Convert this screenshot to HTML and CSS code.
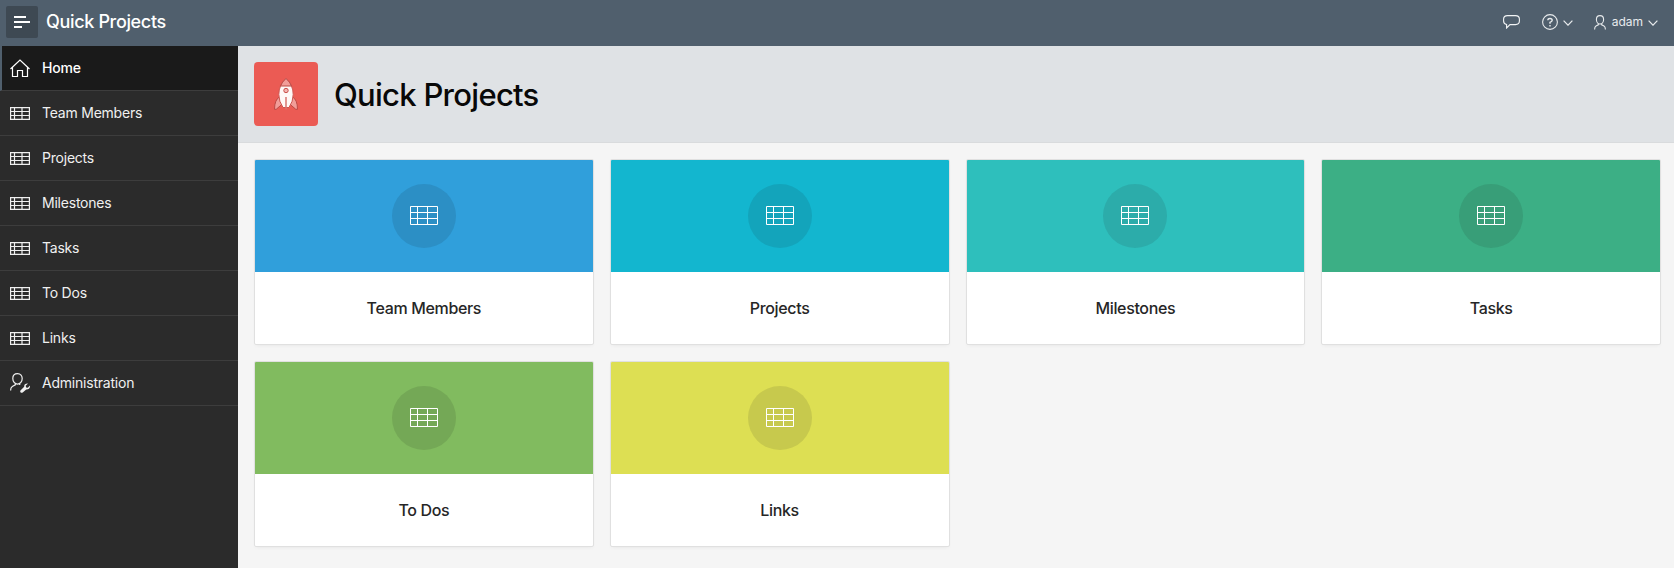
FILE: index.html
```html
<!DOCTYPE html>
<html lang="en">
<head>
<meta charset="utf-8">
<title>Quick Projects</title>
<link rel="stylesheet" href="styles.css">
</head>
<body>
<svg width="0" height="0" class="defs">
  <symbol id="table" viewBox="0 0 20 13"><path d="M.6.6h18.800v11.800H.6zM0 4.500h20M0 8.500h20M4.500 0v13M12 0v13" fill="none" stroke="currentColor" stroke-width="1.200"/></symbol>
  <symbol id="table-lg" viewBox="0 0 28 19"><path d="M.5.5h27v18H.5zM0 6.5h28M0 12.5h28M7.5 0v19M17.5 0v19" fill="none" stroke="currentColor"/></symbol>
  <symbol id="chevron" viewBox="0 0 10 6"><path d="M.6.6 5 5.200 9.400.6" fill="none" stroke="currentColor" stroke-width="1.200"/></symbol>
</svg>
<header class="header">
  <button class="menu-button" aria-label="Menu"><svg width="16" height="12" viewBox="0 0 16 12"><path d="M0 1h12M0 6h16M0 11h8" stroke="#fff" stroke-width="2"/></svg></button>
  <span class="brand">Quick Projects</span>
  <nav class="tools">
    <svg class="chat" width="17" height="14" viewBox="0 0 17 14"><path d="M4.500.6h8q3.900 0 3.900 3.500v2q0 3.500-3.900 3.500H7L3.600 13V9.500Q.6 9 .6 6.100v-2Q.6.6 4.500.6z" fill="none" stroke="#f2f4f5" stroke-width="1.100"/></svg>
    <span class="tool help"><svg width="16" height="16" viewBox="0 0 16 16" fill="none" stroke="#e8ebed"><circle cx="8" cy="8" r="7.400" stroke-width="1.100"/><path d="M5.800 6.300Q5.900 4.500 8 4.500q2.200 0 2.200 1.800Q10.200 7.400 8 8.300v1.400M8 11v1.500" stroke-width="1.400"/></svg><svg class="chev" width="10" height="6"><use href="#chevron"/></svg></span>
    <span class="tool user"><svg width="12" height="15" viewBox="0 0 12 15"><path d="M6 .6c2.400 0 3.600 1.600 3.600 3.900S8.100 9 6 9 2.400 6.800 2.400 4.500 3.600.6 6 .6zM4.300 8.800v1L2 11Q.6 11.800.6 14.500M7.700 8.800v1L10 11q1.400.8 1.400 3.500" fill="none" stroke="#e8ebed" stroke-width="1.100"/></svg><span class="username">adam</span><svg class="chev" width="10" height="6"><use href="#chevron"/></svg></span>
  </nav>
</header>
<div class="layout">
  <aside class="sidebar">
    <a class="item active"><svg width="20" height="18" viewBox="0 0 20 18"><path d="M.5 10 10 1l9.500 9M2.500 8.500v9h5v-6h5v6h5v-9" fill="none" stroke="currentColor" stroke-width="1.200"/></svg><span class="label">Home</span></a>
    <a class="item"><svg width="20" height="13"><use href="#table"/></svg><span class="label">Team Members</span></a>
    <a class="item"><svg width="20" height="13"><use href="#table"/></svg><span class="label">Projects</span></a>
    <a class="item"><svg width="20" height="13"><use href="#table"/></svg><span class="label">Milestones</span></a>
    <a class="item"><svg width="20" height="13"><use href="#table"/></svg><span class="label">Tasks</span></a>
    <a class="item"><svg width="20" height="13"><use href="#table"/></svg><span class="label">To Dos</span></a>
    <a class="item"><svg width="20" height="13"><use href="#table"/></svg><span class="label">Links</span></a>
    <a class="item"><svg width="20" height="20" viewBox="0 0 20 20"><path d="M7.500.7c3.200 0 4.700 2 4.700 4.900s-2 5.600-4.700 5.600-4.700-2.700-4.700-5.600S4.300.7 7.500.7zM5.300 10.500v1.300l-3 1.600Q.6 14.500.6 17.500M9.700 10.500v1.600" fill="none" stroke="currentColor" stroke-width="1.200"/><path d="M18 10.500l-2.300 2.300.4 1.700 1.700.3L20 12.500q.3 4-3.800 3.900L12.700 19.500q-1.400.8-2.200-.3-.7-1 .2-1.900l3.500-3.500q-.3-3.500 3.800-3.300z" fill="currentColor"/></svg><span class="label">Administration</span></a>
  </aside>
  <main class="main">
    <section class="hero">
      <div class="app-icon"><svg width="24" height="32" viewBox="0 0 24 32">
        <path d="M6 18.500Q.5 21.500.5 31.300h1.700l5-4.300M18 18.500q5.500 3 5.500 12.800h-1.700l-5-4.300" fill="#f19d99" stroke="#bb4a45"/>
        <path d="M12 .5Q4.800 7 4.800 16.500q0 7 4.200 13h6q4.200-6 4.200-13Q19.200 7 12 .5z" fill="#fff8f7" stroke="#cf5550"/>
        <path d="M12 .5Q8 4 6.500 8h11Q16 4 12 .5z" fill="#f19d99" stroke="#bb4a45"/>
        <circle cx="12" cy="12.500" r="2.200" fill="#f5b5b2" stroke="#c9504b"/><path d="M12 19v12.500" stroke="#d8746f" stroke-width="1.500"/></svg></div>
      <h1 class="title">Quick Projects</h1>
    </section>
    <section class="cards">
      <article class="card blue"><div class="card-top"><span class="circle"><svg width="28" height="19"><use href="#table-lg"/></svg></span></div><h2 class="card-title">Team Members</h2></article>
      <article class="card cyan"><div class="card-top"><span class="circle"><svg width="28" height="19"><use href="#table-lg"/></svg></span></div><h2 class="card-title">Projects</h2></article>
      <article class="card teal"><div class="card-top"><span class="circle"><svg width="28" height="19"><use href="#table-lg"/></svg></span></div><h2 class="card-title">Milestones</h2></article>
      <article class="card green"><div class="card-top"><span class="circle"><svg width="28" height="19"><use href="#table-lg"/></svg></span></div><h2 class="card-title">Tasks</h2></article>
      <article class="card lime"><div class="card-top"><span class="circle"><svg width="28" height="19"><use href="#table-lg"/></svg></span></div><h2 class="card-title">To Dos</h2></article>
      <article class="card yellow"><div class="card-top"><span class="circle"><svg width="28" height="19"><use href="#table-lg"/></svg></span></div><h2 class="card-title">Links</h2></article>
    </section>
  </main>
</div>
</body>
</html>
```
FILE: styles.css
```css
* { box-sizing: border-box; }
body { margin: 0; height: 568px; display: flex; flex-direction: column; overflow: hidden; font-family: Inter, "Liberation Sans", sans-serif; background: #f5f5f5; }
svg { display: block; flex: none; }
.defs { position: absolute; }
.header { flex: none; height: 46px; display: flex; align-items: center; padding: 0 16px 2px 6px; background: #505f6d; color: #fff; }
.menu-button { width: 32px; height: 32px; padding: 0; border: 0; border-radius: 2px; background: #3e4953; display: flex; align-items: center; justify-content: center; }
.brand { margin-left: 8px; font-size: 18px; font-weight: 450; letter-spacing: -0.34px; line-height: 24px; }
.tools { margin-left: auto; display: flex; align-items: center; color: #e8ebed; }
.tool { display: flex; align-items: center; }
.help { margin-left: 22px; }
.user { margin-left: 21px; }
.chat { width: 17px; }
.chev { margin: 1px 0 0 5px; }
.username { margin-left: 6px; font-size: 12px; line-height: 16px; }
.layout { flex: 1; display: flex; min-height: 0; }
.sidebar { flex: none; width: 238px; background: #2b2b2b; }
.item { height: 45px; display: flex; align-items: center; gap: 12px; padding-left: 10px; border-bottom: 1px solid #3d3d3d; color: #f0f0f0; font-size: 14px; letter-spacing: -0.22px; }
.label { padding-bottom: 2px; }
.active { padding-left: 8px; border-left: 2px solid #505f6d; background: #1a1a1a; color: #fff; font-weight: 500; }
.main { flex: 1; min-width: 0; }
.hero { height: 97px; display: flex; align-items: center; gap: 16px; padding: 0 16px; background: #dfe2e5; border-bottom: 1px solid #d9dbdd; }
.app-icon { width: 64px; height: 64px; border-radius: 4px; background: #eb5b54; display: flex; align-items: center; justify-content: center; }
.title { margin: 0; padding-top: 1px; font-size: 31px; font-weight: 450; letter-spacing: -0.72px; line-height: 40px; color: #080808; }
.cards { display: grid; grid-template-columns: repeat(4, 1fr); gap: 16px; padding: 16px 13px 16px 16px; }
.card { height: 186px; border: 1px solid #e0e0e0; border-radius: 2px; background: #fff; box-shadow: 0 2px 4px -2px rgba(0, 0, 0, .08); overflow: hidden; }
.card-top { height: 112px; display: flex; align-items: center; justify-content: center; }
.circle { width: 64px; height: 64px; padding-bottom: 1px; border-radius: 50%; background: rgba(40, 50, 40, .15); color: #fff; display: flex; align-items: center; justify-content: center; }
.card-title { margin: 0; height: 72px; line-height: 72px; text-align: center; font-size: 16px; font-weight: 500; letter-spacing: -0.34px; color: #262626; }
.blue .card-top { background: #309fdb; }
.cyan .card-top { background: #13b6cf; }
.teal .card-top { background: #2ebfbc; }
.green .card-top { background: #3caf85; }
.lime .card-top { background: #81bb5f; }
.yellow .card-top { background: #dddf53; }
.blue .circle { background: #2c8fc5; }
.cyan .circle { background: #13a4bb; }
.teal .circle { background: #2cacaa; }
.green .circle { background: #389e78; }
.lime .circle { background: #74a856; }
.yellow .circle { background: #c7c94d; }
```
